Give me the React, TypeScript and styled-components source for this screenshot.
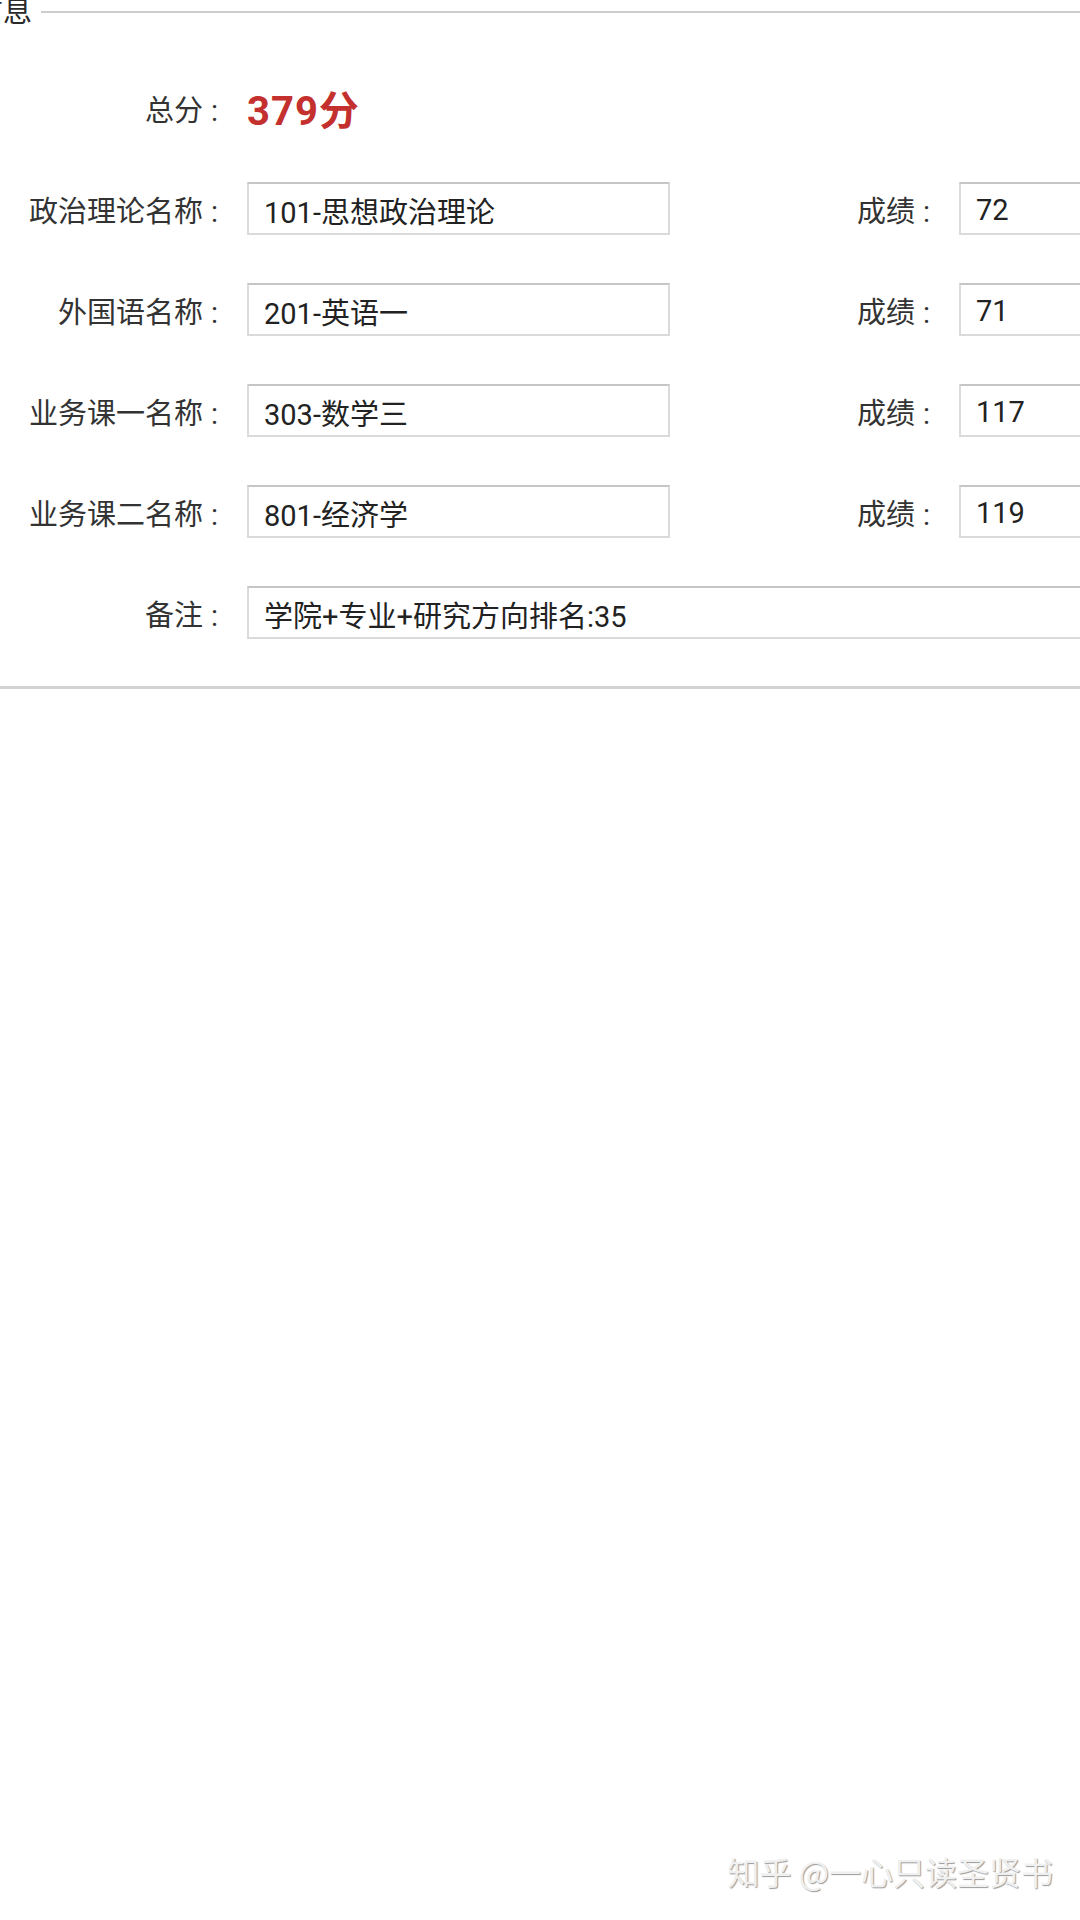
import React from 'react';
import styled, { createGlobalStyle } from 'styled-components';

const GlobalStyle = createGlobalStyle`
    body {
        margin: 0;
        background-color: #ffffff;
        font-family: Roboto, "Noto Sans CJK SC", sans-serif;
    }
`;

const Page = styled.div`
    position: relative;
    width: 1080px;
    height: 1920px;
    overflow: hidden;
    background-color: #ffffff;
`;

const Panel = styled.section`
    border-bottom: 3px solid #d3d3d3;
    padding-bottom: 47px;
`;

const Header = styled.div`
    display: flex;
    align-items: center;
    height: 24px;
`;

const Legend = styled.span`
    margin-left: -26px;
    padding-right: 9px;
    font-size: 29px;
    line-height: 24px;
    color: #2a2a2a;
`;

const Line = styled.div`
    flex: 1;
    height: 2px;
    background-color: #cdcdcd;
`;

const Body = styled.div`
    display: flex;
    flex-direction: column;
    gap: 48px;
    margin-top: 57px;
`;

const Row = styled.div`
    display: flex;
    align-items: center;
    height: 53px;
`;

const Label = styled.div<{ $width: number }>`
    display: flex;
    justify-content: flex-end;
    align-items: center;
    flex: none;
    width: ${(p) => p.$width}px;
    font-size: 29px;
    color: #333333;
    white-space: nowrap;
`;

const Colon = styled.span`
    margin-left: 8px;
    transform: translateY(3px);
`;

const Field = styled.div<{ $width: number }>`
    flex: none;
    box-sizing: border-box;
    width: ${(p) => p.$width}px;
    height: 53px;
    margin-left: 29px;
    padding: 2px 15px 0;
    display: flex;
    align-items: center;
    border: 2px solid #dadada;
    border-top-color: #c6c6c6;
    font-size: 29px;
    color: #222222;
    white-space: nowrap;
`;

const Total = styled.span`
    margin-left: 29px;
    font-size: 40px;
    font-weight: bold;
    letter-spacing: 1px;
    color: #c3302d;
`;

const Watermark = styled.div`
    position: absolute;
    right: 27px;
    bottom: 26px;
    font-size: 32px;
    color: #f0f0f0;
    text-shadow: 1px 1px 1px #9a9a9a;
    font-family: "Noto Sans CJK SC", sans-serif;
`;

const subjects = [
    { label: '政治理论名称', name: '101-思想政治理论', score: '72' },
    { label: '外国语名称', name: '201-英语一', score: '71' },
    { label: '业务课一名称', name: '303-数学三', score: '117' },
    { label: '业务课二名称', name: '801-经济学', score: '119' },
];

export default function App() {
    return (
        <Page>
            <GlobalStyle />
            <Panel>
                <Header>
                    <Legend>信息</Legend>
                    <Line />
                </Header>
                <Body>
                    <Row>
                        <Label $width={218}>
                            总分<Colon>:</Colon>
                        </Label>
                        <Total>379分</Total>
                    </Row>
                    {subjects.map((s) => (
                        <Row key={s.label}>
                            <Label $width={218}>
                                {s.label}
                                <Colon>:</Colon>
                            </Label>
                            <Field $width={423}>{s.name}</Field>
                            <Label $width={260}>
                                成绩<Colon>:</Colon>
                            </Label>
                            <Field $width={200}>{s.score}</Field>
                        </Row>
                    ))}
                    <Row>
                        <Label $width={218}>
                            备注<Colon>:</Colon>
                        </Label>
                        <Field $width={900}>学院+专业+研究方向排名:35</Field>
                    </Row>
                </Body>
            </Panel>
            <Watermark>知乎 @一心只读圣贤书</Watermark>
        </Page>
    );
}
